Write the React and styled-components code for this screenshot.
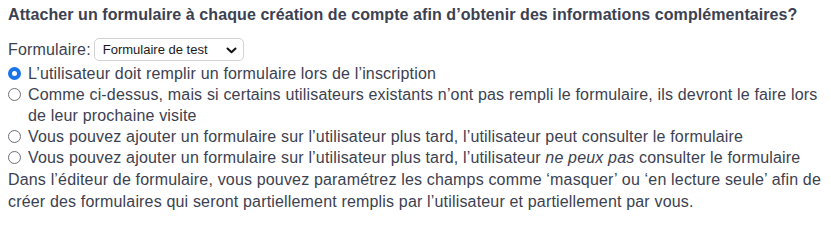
import React from 'react'
import styled, { createGlobalStyle } from 'styled-components'

const GlobalStyle = createGlobalStyle`
  body {
    margin: 0;
    background: #fff;
    font-family: "Liberation Sans", Arial, sans-serif;
    color: #3c4150;
  }
`

const options = [
  { id: 'always', checked: true, label: <>L’utilisateur doit remplir un formulaire lors de l’inscription</> },
  {
    id: 'next',
    label: (
      <>
        Comme ci-dessus, mais si certains utilisateurs existants n’ont pas rempli le formulaire, ils devront le faire lors
        <br />
        de leur prochaine visite
      </>
    ),
  },
  { id: 'later', label: <>Vous pouvez ajouter un formulaire sur l’utilisateur plus tard, l’utilisateur peut consulter le formulaire</> },
  {
    id: 'hidden',
    label: (
      <>
        Vous pouvez ajouter un formulaire sur l’utilisateur plus tard, l’utilisateur <em>ne peux pas</em> consulter le formulaire
      </>
    ),
  },
]

const Wrapper = styled.section`
  padding: 5px 8px 0 8px;
  font-size: 16px;
  line-height: 21px;
  letter-spacing: 0.17px;
`

const Title = styled.h3`
  margin: 0 0 12px;
  font-size: 16px;
  font-weight: 700;
  line-height: 20px;
  letter-spacing: 0.08px;
  color: #3b4152;
`

const FieldRow = styled.div`
  display: flex;
  align-items: center;
  gap: 3px;
  height: 25px;
  margin-bottom: 1px;
`

const SelectBox = styled.div`
  position: relative;
  width: 150px;
  height: 23px;
  box-sizing: border-box;
  border: 1px solid #d3d3d6;
  border-radius: 5px;
  background: #fff;
  display: flex;
  align-items: center;
  padding-left: 8px;
  font-size: 13px;
  letter-spacing: 0;
  color: #1a1a1a;
  svg {
    position: absolute;
    right: 6px;
    top: 8px;
  }
`

const RadioList = styled.div`
  display: flex;
  flex-direction: column;
`

const RadioRow = styled.label`
  display: flex;
  align-items: flex-start;
  gap: 7px;
  em {
    font-style: italic;
  }
`

const Dot = styled.span`
  flex: none;
  width: 13px;
  height: 13px;
  margin-top: 4px;
  box-sizing: border-box;
  border-radius: 50%;
  border: ${(p) => (p.$on ? '4px solid #1a73e8' : '1px solid #6c6f78')};
  background: #fff;
`

const Note = styled.p`
  margin: 1px 0 0;
  line-height: 22px;
`

const App = () => (
  <>
    <GlobalStyle />
    <Wrapper>
      <Title>Attacher un formulaire à chaque création de compte afin d’obtenir des informations complémentaires?</Title>
      <FieldRow>
        <span>Formulaire:</span>
        <SelectBox>
          Formulaire de test
          <svg width="11" height="7" viewBox="0 0 11 7">
            <path d="M1.5 1.5 L5.5 5.3 L9.5 1.5" fill="none" stroke="#111" strokeWidth="2" strokeLinecap="round" strokeLinejoin="round" />
          </svg>
        </SelectBox>
      </FieldRow>
      <RadioList>
        {options.map((o) => (
          <RadioRow key={o.id}>
            <Dot $on={o.checked} />
            <span>{o.label}</span>
          </RadioRow>
        ))}
      </RadioList>
      <Note>
        Dans l’éditeur de formulaire, vous pouvez paramétrez les champs comme ‘masquer’ ou ‘en lecture seule’ afin de
        <br />
        créer des formulaires qui seront partiellement remplis par l’utilisateur et partiellement par vous.
      </Note>
    </Wrapper>
  </>
)

export default App
